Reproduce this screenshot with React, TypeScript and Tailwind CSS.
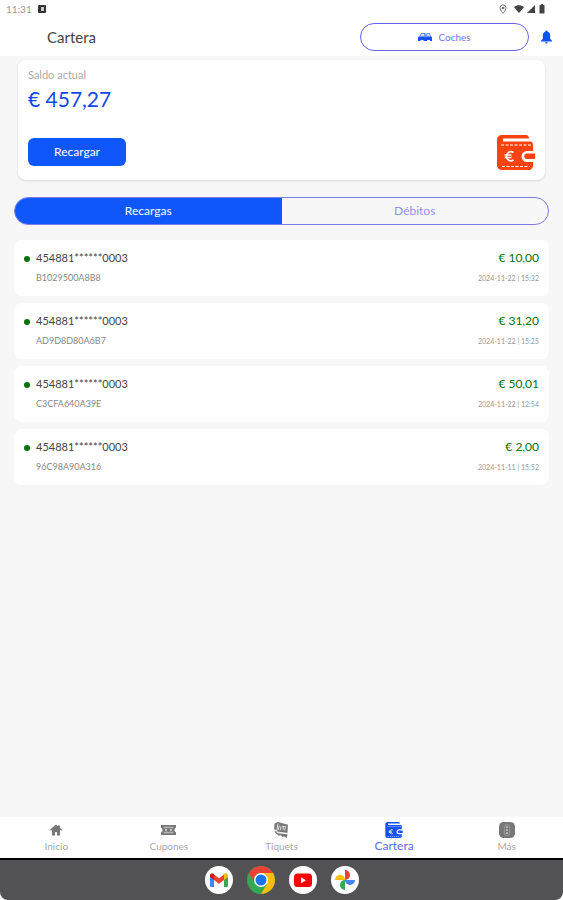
import clsx from 'clsx'
import { useState } from 'react'

type TabId = 'recargas' | 'debitos'
type IconProps = { className?: string }

const movements = [
  { card: '454881******0003', code: 'B1029500A8B8', amount: '€ 10,00', date: '2024-11-22 | 15:32' },
  { card: '454881******0003', code: 'AD9D8D80A6B7', amount: '€ 31,20', date: '2024-11-22 | 15:25' },
  { card: '454881******0003', code: 'C3CFA640A39E', amount: '€ 50,01', date: '2024-11-22 | 12:54' },
  { card: '454881******0003', code: '96C98A90A316', amount: '€ 2,00', date: '2024-11-11 | 15:52' },
]

function HomeIcon({ className }: IconProps) {
  return (
    <svg viewBox="0 0 24 24" fill="currentColor" className={className}>
      <path d="M12 1 0 11.500l1.800 2L4 12.200V23h6v-7h4v7h6V12.200l2.200 1.300 1.800-2-4-3.600V3h-4v1.500z" />
    </svg>
  )
}

function CouponIcon({ className }: IconProps) {
  return (
    <svg viewBox="0 0 30 20" className={className}>
      <path fill="currentColor" d="M0 0h30v5l-3 3v4l3 3v5H0v-5l3-3V8L0 5z" />
      <path stroke="#fff" strokeWidth="1.200" fill="none" d="M5 4.500h20M5 15.500h20M8 7l4 6M12 7l-4 6M18 7l4 6M22 7l-4 6" />
    </svg>
  )
}

function TicketIcon({ className }: IconProps) {
  return (
    <svg viewBox="0 0 28 30" className={className}>
      <g fill="currentColor">
        <path d="M2 3 8 0l19 5-1 16-19-2-6-6z" />
        <path d="m2 16 6 5 18 2-1 7-5-3-3 1-3-3-4 1-7-6z" />
      </g>
      <path stroke="#fff" strokeWidth="1.400" fill="none" d="M8 3 6 17M12 7l-2 1-1 6 2 1M14 8l-1 7M18 8v7M16 8l8 1M22 9l-1 7M3 14l5 5 17 2" />
    </svg>
  )
}

function WalletIcon({ className }: IconProps) {
  return (
    <svg viewBox="0 0 38 35" className={className}>
      <path fill="currentColor" d="M5 0h24c2 0 3 2 3 3.500H6v3h27c2 0 3 1.500 3 3V16h-6a5 5 0 0 0 0 11h6v4c0 2-2 4-4 4H6c-4 0-6-2-6-5V5c0-3 2-5 5-5z" />
      <path fill="currentColor" d="M30 18.500h8v5.500h-8a2.750 2.750 0 0 1 0-5.500z" />
      <g fill="none" stroke="#fff">
        <path d="M4 10h30M5 31.500h28" strokeDasharray="3 1.500" strokeWidth="1.100" />
        <path d="M16.500 17.500a4.500 4.500 0 1 0 0 7.500M7.500 20h7M7.500 22.500h7" strokeWidth="1.700" />
      </g>
    </svg>
  )
}

function MoreIcon({ className }: IconProps) {
  return (
    <svg viewBox="0 0 24 24" className={className}>
      <rect width="24" height="24" rx="7" fill="currentColor" />
      <rect x="8" y="4" width="8" height="16" rx="3" fill="none" stroke="#aaa" strokeWidth="1" />
      <g fill="#eee">
        <circle cx="12" cy="7.500" r="1.300" />
        <circle cx="12" cy="12" r="1.300" />
        <circle cx="12" cy="16.500" r="1.300" />
      </g>
    </svg>
  )
}

function CarsIcon({ className }: IconProps) {
  return (
    <svg viewBox="0 0 28 16" fill="currentColor" className={className}>
      <path opacity=".65" d="M6 0h8l2 2 2-2h5l3 6 2 2v7h-4v-2H4v2H0V8l3-2z" />
      <path d="M1 8h11l2 1 2-1h11l1 2v6h-4v-2h-6v2h-7v-2H5v2H0v-6z" />
      <path fill="#fff" opacity=".7" d="M7 2h5l1 4H5zM18 2h4l2 4h-7z" />
    </svg>
  )
}

function BellIcon({ className }: IconProps) {
  return (
    <svg viewBox="0 0 24 28" fill="currentColor" className={className}>
      <path d="M12 0a2.500 2.500 0 0 0-2.500 2.700C5.500 4 4 7.500 4 11v7l-4 4v2h24v-2l-4-4v-7c0-3.500-1.500-7-5.500-8.300A2.500 2.500 0 0 0 12 0zM9 25.500h6a3 3 0 0 1-6 0z" />
    </svg>
  )
}

function StatusIcons() {
  return (
    <svg viewBox="0 0 46 10" className="h-[10px] w-[46px]">
      <path fill="none" stroke="#777" d="M4 .8a3 3 0 0 0-3 3C1 6 4 9.300 4 9.300S7 6 7 3.800a3 3 0 0 0-3-3z" />
      <circle cx="4" cy="4" r="1.300" fill="#777" />
      <path fill="#444" d="M15 3.200c3-2.600 7-2.600 10 0L20 9z" />
      <path fill="#444" d="M36 1v8h-8z" />
      <path fill="#444" d="M42 1V0h2v1h1.500v8.500h-5V1z" />
    </svg>
  )
}

function GmailLogo() {
  return (
    <svg viewBox="0 0 28 28" className="size-7">
      <circle cx="14" cy="14" r="14" fill="#fff" />
      <path fill="#4285f4" d="M5 9.500v10c0 1 .6 1.500 1.500 1.500H9v-9z" />
      <path fill="#34a853" d="M23 9.500v10c0 1-.6 1.500-1.500 1.500H19v-9z" />
      <path fill="#ea4335" d="m9 8.500 5 3.800 5-3.800V14l-5 3.800L9 14z" />
      <path fill="#c5221f" d="M5 9.500C5 7 7.500 6.500 9 8v6l-4-3z" />
      <path fill="#fbbc04" d="M23 9.500c0-2.500-2.500-3-4-1.500v6l4-3z" />
    </svg>
  )
}

function ChromeLogo() {
  return (
    <svg viewBox="0 0 28 28" className="size-7">
      <circle cx="14" cy="14" r="14" fill="#34a853" />
      <path fill="#fbbc04" d="M14 7h12.100A14 14 0 0 1 14 28l6.100-10.500z" />
      <path fill="#ea4335" d="M1.900 7A14 14 0 0 1 26.100 7H14a7 7 0 0 0-6.100 10.500z" />
      <circle cx="14" cy="14" r="7" fill="#fff" />
      <circle cx="14" cy="14" r="5.500" fill="#1a73e8" />
    </svg>
  )
}

function YoutubeLogo() {
  return (
    <svg viewBox="0 0 28 28" className="size-7">
      <circle cx="14" cy="14" r="14" fill="#fff" />
      <rect x="5" y="7.500" width="18" height="13.500" rx="3.500" fill="#f00" />
      <path fill="#fff" d="m12 11.200 5 3-5 3z" />
    </svg>
  )
}

function PhotosLogo() {
  return (
    <svg viewBox="0 0 28 28" className="size-7">
      <circle cx="14" cy="14" r="14" fill="#fff" />
      <path fill="#ea4335" d="M14 4a5 5 0 0 1 0 10z" />
      <path fill="#4285f4" d="M24 14a5 5 0 0 1-10 0z" />
      <path fill="#34a853" d="M14 24a5 5 0 0 1 0-10z" />
      <path fill="#fbbc04" d="M4 14a5 5 0 0 1 10 0z" />
    </svg>
  )
}

const navItems = [
  { label: 'Inicio', Icon: HomeIcon, size: 'size-3' },
  { label: 'Cupones', Icon: CouponIcon, size: 'h-[10px] w-[15px]' },
  { label: 'Tiquets', Icon: TicketIcon, size: 'size-4' },
  { label: 'Cartera', Icon: WalletIcon, size: 'h-4 w-[18px]', active: true },
  { label: 'Más', Icon: MoreIcon, size: 'size-4' },
]

const dockApps = [
  { name: 'Gmail', Logo: GmailLogo },
  { name: 'Chrome', Logo: ChromeLogo },
  { name: 'YouTube', Logo: YoutubeLogo },
  { name: 'Fotos', Logo: PhotosLogo },
]

export default function App() {
  const [tab, setTab] = useState<TabId>('recargas')

  return (
    <div className="flex min-h-screen flex-col bg-[#f7f7f7] font-['Lato',sans-serif]">
      {/* Status bar */}
      <div className="flex h-[18px] items-center justify-between bg-white pr-[18px] pl-[6px]">
        <div className="flex items-center gap-[6px]">
          <span className="text-[10px] leading-3 text-[#999]">11:31</span>
          <svg viewBox="0 0 8 8" className="size-2">
            <rect width="8" height="8" rx="1" fill="#333" />
            <path d="M3 2h3v4H3z" fill="#ccc" />
          </svg>
        </div>
        <StatusIcons />
      </div>

      {/* Header */}
      <header className="flex h-[38px] items-center justify-between bg-white pr-[11px] pl-[47px]">
        <h1 className="text-[15px] leading-5 text-[#444]">Cartera</h1>
        <div className="flex w-[38%] items-center gap-3">
          <button className="flex h-7 flex-1 items-center justify-center gap-[6px] rounded-full border border-[#6464f0] text-[10px] text-[#7474f0]">
            <CarsIcon className="h-2 w-[14px] text-[#1450f5]" />
            Coches
          </button>
          <button aria-label="Notificaciones" className="text-[#0b54fb]">
            <BellIcon className="h-[14px] w-[11px]" />
          </button>
        </div>
      </header>

      <main className="flex-1 px-[14px] pt-1">
        {/* Balance */}
        <section className="mx-1 flex h-[120px] flex-col rounded-lg bg-white px-[10px] pt-[9px] pb-[10px] shadow-sm">
          <p className="text-[11px] leading-3 text-[#aaa]">Saldo actual</p>
          <p className="mt-1 text-[21px] leading-7 text-[#1048e8]">€ 457,27</p>
          <div className="mt-auto flex items-end justify-between">
            <button className="mb-1 h-7 w-[98px] rounded-md bg-[#0f57fb] text-[12px] text-white">Recargar</button>
            <WalletIcon className="h-[35px] w-[38px] text-[#fb4312]" />
          </div>
        </section>

        {/* Tabs */}
        <div role="tablist" className="mt-[17px] flex h-7 overflow-hidden rounded-full border border-[#7c7ce8]">
          {([
            { id: 'recargas', label: 'Recargas' },
            { id: 'debitos', label: 'Débitos' },
          ] as { id: TabId; label: string }[]).map(t => (
            <button
              key={t.id}
              role="tab"
              aria-selected={tab === t.id}
              onClick={() => setTab(t.id)}
              className={clsx('flex-1 text-[12px]', tab === t.id ? 'bg-[#0f57fb] text-white' : 'text-[#9090f0]')}
            >
              {t.label}
            </button>
          ))}
        </div>

        {/* Movements */}
        <ul className="mt-[15px] flex flex-col gap-[7px]">
          {tab === 'recargas' && movements.map(m => (
            <li key={m.code} className="flex h-14 justify-between rounded-lg bg-white px-[10px] pt-[10px]">
              <div className="flex gap-[6px]">
                <span className="mt-[6px] size-[6px] rounded-full bg-[#08720d]" />
                <div>
                  <p className="text-[11px] leading-4 text-[#444]">{m.card}</p>
                  <p className="mt-[6px] text-[9px] leading-3 text-[#888]">{m.code}</p>
                </div>
              </div>
              <div className="text-right">
                <p className="text-[12px] leading-4 text-[#08720d]">{m.amount}</p>
                <p className="mt-[6px] text-[7px] leading-3 text-[#999]">{m.date}</p>
              </div>
            </li>
          ))}
        </ul>
      </main>

      {/* Bottom navigation */}
      <nav className="grid h-[41px] grid-cols-5 bg-white">
        {navItems.map(({ label, Icon, size, active }) => (
          <a
            key={label}
            href="#"
            className={clsx('flex flex-col items-center pt-[5px]', active ? 'text-[#1450f5]' : 'text-[#777]')}
          >
            <span className="flex h-4 items-center">
              <Icon className={size} />
            </span>
            <span className={clsx('leading-4', active ? 'text-[12px] text-[#5570f5]' : 'text-[10px] text-[#aaa]')}>
              {label}
            </span>
          </a>
        ))}
      </nav>

      {/* Dock */}
      <footer className="bg-white">
        <div className="flex h-[42px] items-center justify-center gap-[14px] rounded-b-lg border-t-2 border-black bg-[#525254]">
          {dockApps.map(({ name, Logo }) => (
            <button key={name} aria-label={name}>
              <Logo />
            </button>
          ))}
        </div>
      </footer>
    </div>
  )
}
